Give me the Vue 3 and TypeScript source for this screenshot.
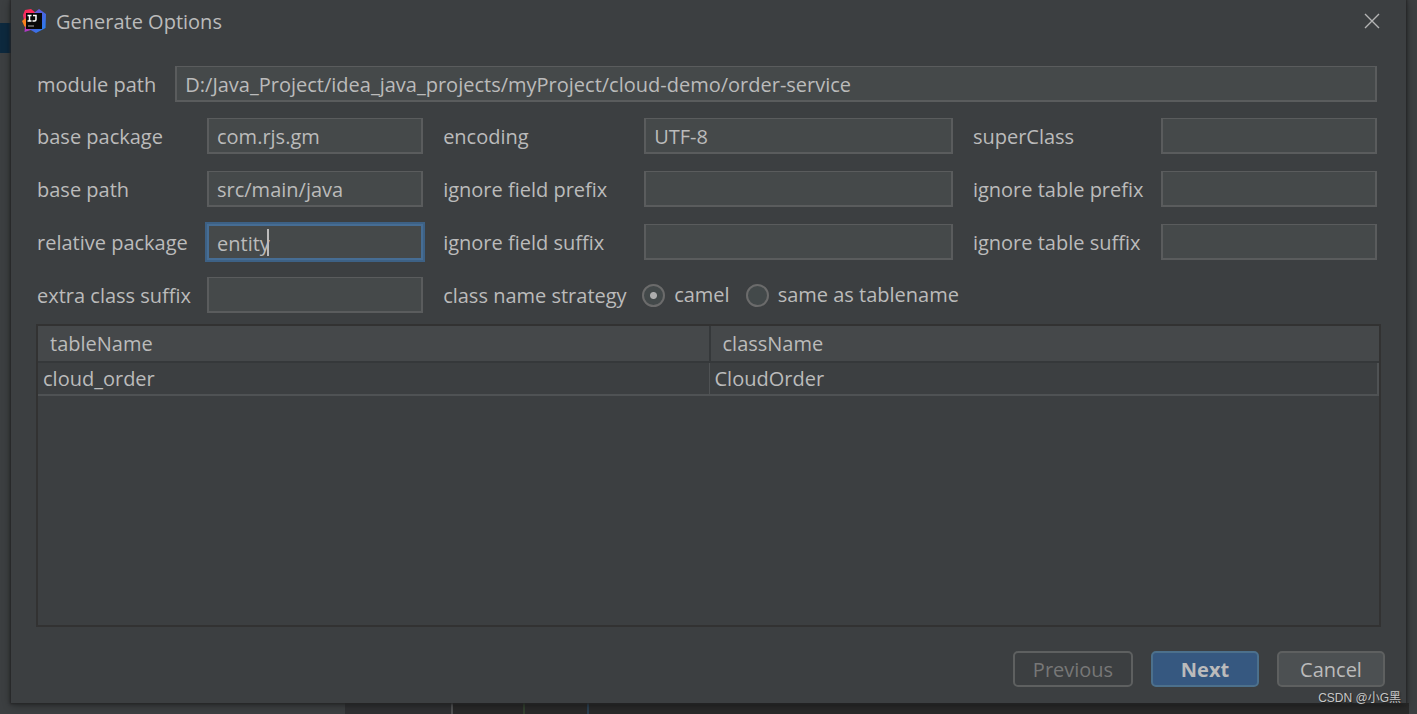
<script setup lang="ts">
import { reactive, ref } from 'vue'

interface Field {
  id: string
  label: string
  value: string
  focused?: boolean
}

const modulePath = ref('D:/Java_Project/idea_java_projects/myProject/cloud-demo/order-service')

const fields = reactive<Field[]>([
  { id: 'base-package', label: 'base package', value: 'com.rjs.gm' },
  { id: 'encoding', label: 'encoding', value: 'UTF-8' },
  { id: 'super-class', label: 'superClass', value: '' },
  { id: 'base-path', label: 'base path', value: 'src/main/java' },
  { id: 'field-prefix', label: 'ignore field prefix', value: '' },
  { id: 'table-prefix', label: 'ignore table prefix', value: '' },
  { id: 'relative-package', label: 'relative package', value: 'entity', focused: true },
  { id: 'field-suffix', label: 'ignore field suffix', value: '' },
  { id: 'table-suffix', label: 'ignore table suffix', value: '' },
  { id: 'class-suffix', label: 'extra class suffix', value: '' },
])

const strategies = ['camel', 'same as tablename']
const strategy = ref('camel')

const rows = [{ tableName: 'cloud_order', className: 'CloudOrder' }]
</script>

<template>
  <div class="desktop">
    <main class="dialog">
      <header class="titlebar">
        <svg class="logo" viewBox="0 0 24 24" aria-hidden="true">
          <defs>
            <linearGradient id="blue" x1="0" y1="0" x2="1" y2="1">
              <stop offset="0" stop-color="#8a4fd0" />
              <stop offset="0.5" stop-color="#4a63e0" />
              <stop offset="1" stop-color="#1f86f2" />
            </linearGradient>
            <linearGradient id="pink" x1="0" y1="0" x2="0" y2="1">
              <stop offset="0" stop-color="#fe2857" />
              <stop offset="0.6" stop-color="#e9346f" />
              <stop offset="1" stop-color="#a63bd0" />
            </linearGradient>
          </defs>
          <path d="M3 1 L9 0 L14 4 L12 20 L2.500 23 L3 18 L1 6 Z" fill="url(#pink)" />
          <path d="M0 12 L3 9.500 L5 10 V18 L2.500 17.500 Z" fill="#fc801d" />
          <path d="M12 4 L17 0 L24 5 L23.500 19 L14 24 L7 20 Z" fill="url(#blue)" />
          <rect x="4" y="4" width="16" height="16" fill="#080808" />
          <path d="M5.500 6.500 H9.500 M7.500 6.500 V12 M5.500 12 H9.500 M11 6.500 H14 V10.500 Q14 12 12.500 12 H10.500" fill="none" stroke="#fff" stroke-width="1.500" />
          <path d="M6 17 H12" stroke="#aaa" stroke-width="1" />
        </svg>
        <h1>Generate Options</h1>
        <button class="close" type="button" aria-label="Close">
          <svg viewBox="0 0 16 16"><path d="M1 1 L15 15 M15 1 L1 15" /></svg>
        </button>
      </header>

      <form class="form" @submit.prevent>
        <div class="module">
          <label for="module-path">module path</label>
          <input id="module-path" v-model="modulePath" type="text" />
        </div>
        <div class="grid">
          <template v-for="f in fields" :key="f.id">
            <label :for="f.id">{{ f.label }}</label>
            <span class="box" :class="{ focused: f.focused }">
              <input :id="f.id" v-model="f.value" type="text" />
              <i v-if="f.focused" class="caret"></i>
            </span>
          </template>
          <span id="strategy">class name strategy</span>
          <div class="radios" role="radiogroup" aria-labelledby="strategy">
            <label v-for="s in strategies" :key="s">
              <input v-model="strategy" type="radio" name="strategy" :value="s" />{{ s }}
            </label>
          </div>
        </div>
      </form>

      <div class="table-pane">
        <table>
          <thead>
            <tr>
              <th scope="col">tableName</th>
              <th scope="col">className</th>
            </tr>
          </thead>
          <tbody>
            <tr v-for="r in rows" :key="r.tableName">
              <td>{{ r.tableName }}</td>
              <td>{{ r.className }}</td>
            </tr>
          </tbody>
        </table>
      </div>

      <footer class="actions">
        <button class="previous" type="button" disabled>Previous</button>
        <button class="next" type="button">Next</button>
        <button class="cancel" type="button">Cancel</button>
      </footer>
    </main>
    <span class="watermark">CSDN @小G黑</span>
  </div>
</template>

<style>
body {
  margin: 0;
  background: #3c3f41;
}
</style>

<style scoped>
.desktop {
  position: relative;
  box-sizing: border-box;
  display: flex;
  min-height: 100vh;
  padding: 0 11px 11px;
  overflow: hidden;
  color: #bbbbbb;
  font: 20px/28px "Open Sans", "Noto Sans CJK SC", sans-serif;
  background:
    linear-gradient(#0d293e, #0d293e) 0 23px / 11px 30px no-repeat,
    linear-gradient(#505152, #505152) 451px 100% / 2px 11px no-repeat,
    linear-gradient(#32402f, #32402f) 523px 100% / 2px 11px no-repeat,
    linear-gradient(#2b3f50, #2b3f50) 587px 100% / 2px 11px no-repeat,
    linear-gradient(90deg, transparent 345px, #2f3032 345px, #2f3032 451px, #292929 451px, #292929 calc(100% - 8px), transparent calc(100% - 8px)) 0 100% / 100% 11px no-repeat,
    #3c3f41;
}
.dialog {
  box-sizing: border-box;
  display: flex;
  flex: 1;
  flex-direction: column;
  min-width: 0;
  padding: 0 25px 16px;
  background: #3c3f41;
  box-shadow: 0 0 2px 1px #252627, 0 2px 8px rgba(0, 0, 0, 0.4);
}
.titlebar {
  display: flex;
  align-items: center;
  height: 44px;
  margin: 0 1px 22px -14px;
}
.logo {
  width: 24px;
  height: 24px;
  margin: 0 10px 2px 0;
}
h1 {
  flex: 1;
  margin: 0;
  font: inherit;
}
.close {
  display: flex;
  margin-bottom: 2px;
  padding: 0;
  border: 0;
  background: none;
}
.close svg {
  width: 16px;
  height: 16px;
  fill: none;
  stroke: #b4b4b4;
  stroke-width: 1.4;
}
.form {
  padding: 0 4px 0 1px;
}
.module {
  display: flex;
  gap: 19px;
  align-items: center;
  margin-bottom: 16px;
}
.module input {
  flex: 1;
}
.grid {
  display: grid;
  grid-template-columns: 150px 7fr 181px 10fr 168px 7fr;
  column-gap: 20px;
  row-gap: 17px;
  align-items: center;
  white-space: nowrap;
}
.module > label,
.grid > label,
#strategy {
  padding-top: 2px;
}
input[type="text"] {
  box-sizing: border-box;
  display: block;
  width: 100%;
  min-width: 0;
  height: 36px;
  margin: 0;
  padding: 2px 8px 0;
  border: 2px solid #5a5c5d;
  border-width: 1px 2px 2px;
  border-radius: 0;
  outline: none;
  color: inherit;
  font: inherit;
  background: #45494a;
}
.box {
  position: relative;
}
.focused input {
  border: 2px solid #466d94;
  box-shadow: 0 0 0 2px #3d6185;
}
.caret {
  position: absolute;
  top: 5px;
  left: 60px;
  width: 2px;
  height: 27px;
  background: #bbbbbb;
}
.radios {
  display: flex;
  grid-column: span 3;
  gap: 18px;
  align-items: center;
}
.radios label {
  display: flex;
  align-items: center;
}
input[type="radio"] {
  box-sizing: border-box;
  width: 23px;
  height: 23px;
  margin: 0 9px 0 -2px;
  border: 2px solid #6b6b6b;
  border-radius: 50%;
  appearance: none;
  background: #43494a;
}
input[type="radio"]:checked {
  background: radial-gradient(circle, #adadad 3px, #43494a 4px);
}
.table-pane {
  flex: 1;
  margin-top: 11px;
  border: 2px solid #323232;
}
table {
  width: 100%;
  table-layout: fixed;
  border-spacing: 0;
}
th {
  height: 35px;
  padding: 0 12px;
  border-bottom: 2px solid #35383a;
  font-weight: normal;
  text-align: left;
  background: #45484a;
}
th + th {
  border-left: 2px solid #35383a;
}
td {
  height: 31px;
  padding: 0 5px;
  border-bottom: 2px solid #4f5254;
}
td + td {
  border-right: 2px solid #4f5254;
  border-left: 1px solid #4f5254;
}
.actions {
  display: flex;
  gap: 18px;
  justify-content: flex-end;
  margin: 24px -4px 0 0;
}
.actions button {
  box-sizing: border-box;
  width: 108px;
  height: 36px;
  padding: 2px 0 0;
  border: 2px solid #5e6060;
  border-radius: 5px;
  color: #bbbbbb;
  font: inherit;
  background: #4c5052;
}
.actions .previous {
  width: 120px;
  color: #777777;
  background: none;
}
.actions .next {
  border-color: #4c708c;
  font-weight: bold;
  background: #365880;
}
.watermark {
  position: absolute;
  right: 16px;
  bottom: 7px;
  color: #c8c8c8;
  font: 12px/18px "Liberation Sans", "Noto Sans CJK SC", sans-serif;
  text-shadow: 1px 1px 1px #222222;
}
</style>
